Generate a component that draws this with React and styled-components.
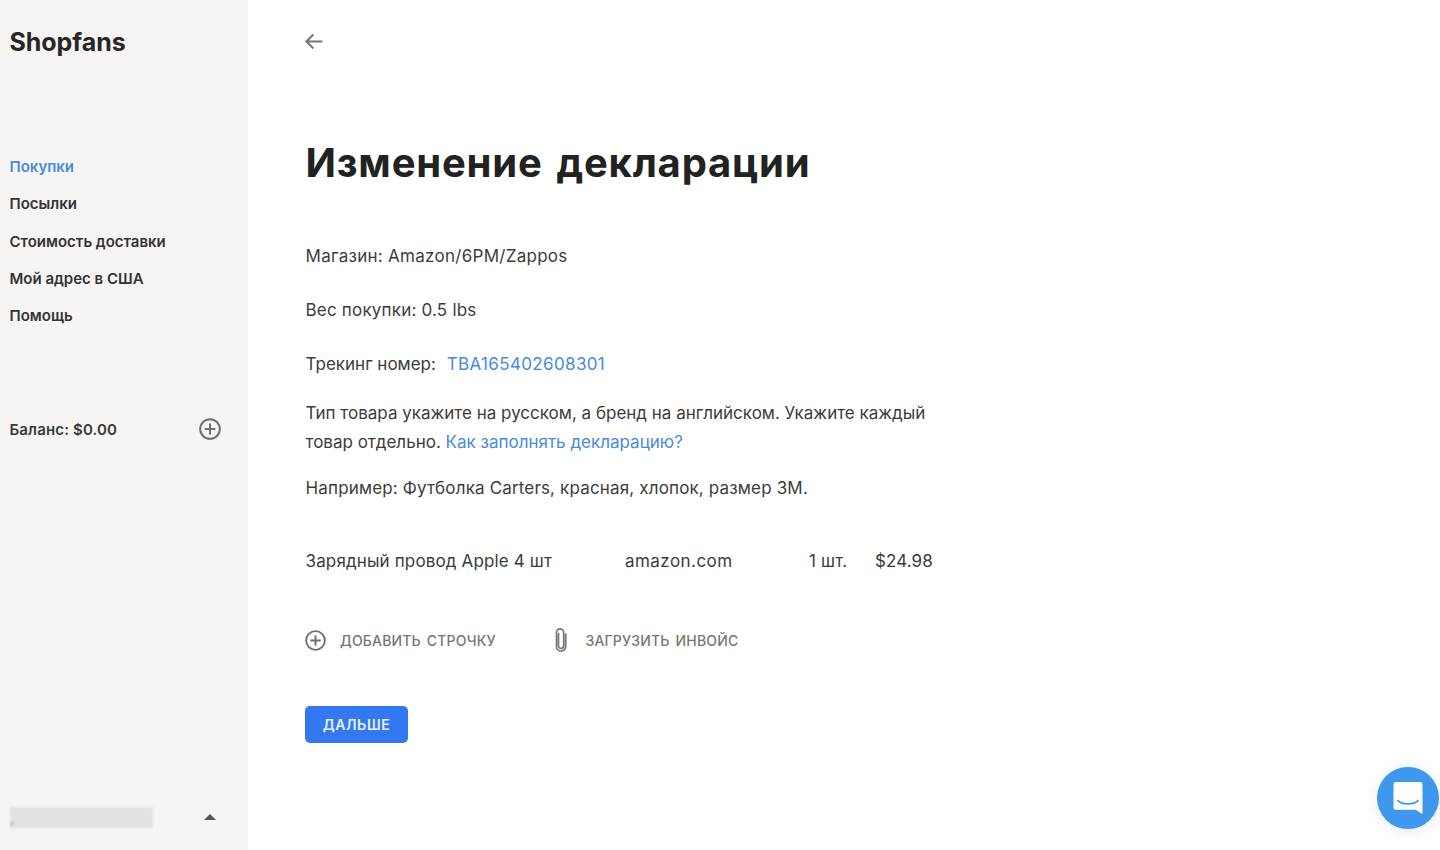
import React from "react";
import styled, { createGlobalStyle } from "styled-components";

const Global = createGlobalStyle`
  html, body { margin: 0; padding: 0; background: #fff; }
  body { font-family: Inter, "Liberation Sans", sans-serif; color: #2b2b2b; -webkit-font-smoothing: antialiased; }
  #root { height: 850px; overflow: hidden; }
`;

const Page = styled.div`
  display: flex;
  width: 1440px;
  height: 850px;
  position: relative;
  overflow: hidden;
`;

const Sidebar = styled.aside`
  width: 248px;
  flex: none;
  box-sizing: border-box;
  background: #f6f5f3;
  padding: 26px 0 20px 9.5px;
  display: flex;
  flex-direction: column;
`;

const Logo = styled.div`
  font-size: 25px;
  line-height: 32px;
  font-weight: 700;
  color: #272727;
  letter-spacing: -0.05px;
`;

const Nav = styled.nav`
  margin-top: 98px;
  display: flex;
  flex-direction: column;
  gap: 15.3px;
`;

const NavItem = styled.a`
  font-size: 15px;
  line-height: 22px;
  font-weight: 600;
  letter-spacing: 0;
  color: ${(p) => (p.$active ? "#4b8ae0" : "#333")};
`;

const Balance = styled.div`
  margin-top: 90px;
  display: flex;
  align-items: center;
  justify-content: space-between;
  width: 211.5px;
  height: 24px;
  font-size: 15px;
  font-weight: 600;
  letter-spacing: 0.15px;
  color: #3a3a3a;
`;

const Account = styled.div`
  margin-top: auto;
  margin-bottom: 2px;
  display: flex;
  align-items: center;
  justify-content: space-between;
  width: 206px;
  height: 22px;
`;

const Redacted = styled.div`
  position: relative;
  width: 143px;
  height: 21px;
  background: #e2e2e1;
  filter: blur(1px);

  &::before {
    content: "";
    position: absolute;
    left: 1px;
    bottom: 2px;
    width: 2px;
    height: 5px;
    background: #bbb;
    transform: rotate(25deg);
  }
`;

const Caret = styled.div`
  width: 0;
  height: 0;
  border-left: 6px solid transparent;
  border-right: 6px solid transparent;
  border-bottom: 6px solid #555;
`;

const Main = styled.main`
  flex: 1;
  padding: 28px 0 0 57.5px;
  display: flex;
  flex-direction: column;
  align-items: flex-start;
`;

const BackButton = styled.button`
  border: 0;
  background: none;
  padding: 0;
  margin-left: -1px;
  width: 18px;
  height: 26px;
  color: #777;
  display: flex;
  align-items: center;
`;

const Title = styled.h1`
  margin: 84px 0 0;
  font-size: 40px;
  line-height: 50px;
  font-weight: 700;
  letter-spacing: 0.8px;
  word-spacing: 3.5px;
  color: #222;
`;

const Info = styled.p`
  margin: ${(p) => p.$top}px 0 0;
  font-size: 17px;
  line-height: 29px;
  letter-spacing: ${(p) => p.$track ?? 0}px;
  color: #3c3c3c;
  width: 640px;
`;

const Link = styled.a`
  color: #4a89dc;
  margin-left: ${(p) => p.$gap || 0}px;
  letter-spacing: ${(p) => p.$track ?? 0}px;
`;

const ItemRow = styled.div`
  margin-top: 44px;
  display: flex;
  font-size: 17px;
  line-height: 29px;
  color: #3c3c3c;
`;

const Cell = styled.span`
  width: ${(p) => p.$w}px;
  flex: none;
  white-space: nowrap;
  letter-spacing: ${(p) => p.$track ?? 0}px;
`;

const Actions = styled.div`
  margin-top: 51px;
  margin-left: -0.5px;
  display: flex;
  align-items: center;
  height: 26px;
`;

const Action = styled.div`
  display: flex;
  align-items: center;
  gap: ${(p) => p.$gap}px;
  width: ${(p) => p.$w}px;
  font-size: 14px;
  font-weight: 500;
  letter-spacing: 0.18px;
  word-spacing: 2px;
  color: #767676;
  white-space: nowrap;
`;

const Primary = styled.button`
  margin-top: 53px;
  margin-left: -0.5px;
  width: 103px;
  height: 37px;
  border: 0;
  border-radius: 5px;
  background: #3378f0;
  color: #e8f0fd;
  font-family: inherit;
  font-size: 14px;
  font-weight: 600;
  letter-spacing: 0.6px;
`;

const Chat = styled.div`
  position: absolute;
  left: 1377px;
  top: 767px;
  width: 62px;
  height: 62px;
  border-radius: 50%;
  background: #3f97ee;
  box-shadow: 0 2px 14px rgba(0, 0, 0, 0.1);
  display: flex;
  align-items: center;
  justify-content: center;
`;

const PlusCircle = ({ size }) => (
  <svg width={size} height={size} viewBox="0 0 22 22" fill="none" stroke="#707070" strokeWidth="2">
    <circle cx="11" cy="11" r="9.8" />
    <path d="M11 5.6v10.8M5.6 11h10.8" />
  </svg>
);

const Clip = () => (
  <svg width="16" height="26" viewBox="0 0 16 26" fill="none" stroke="#767676" strokeWidth="1.7" strokeLinecap="round">
    <path d="M5.5 6.5v12.2a2.6 2.6 0 0 0 5.2 0V5.4a3.6 3.6 0 0 0-7.2 0v14a4.6 4.6 0 0 0 9.2 0V7" />
  </svg>
);

const Arrow = () => (
  <svg width="18" height="16" viewBox="0 0 18 16" fill="none" stroke="#777" strokeWidth="2">
    <path d="M17.5 8.5H1.5M8.4 1.5l-7 7 7 7" />
  </svg>
);

const ChatIcon = () => (
  <svg width="30" height="34" viewBox="0 0 30 34" fill="none">
    <path d="M3 1h24a2.5 2.5 0 0 1 2.5 2.5V33l-7-4.2H3A2.5 2.5 0 0 1 .5 26.3v-22.8A2.5 2.5 0 0 1 3 1z" fill="#fff" />
    <path d="M5 19.5c3 4.4 17 4.4 20 0" stroke="#3f97ee" strokeWidth="1.8" strokeLinecap="round" />
  </svg>
);

const navItems = ["Покупки", "Посылки", "Стоимость доставки", "Мой адрес в США", "Помощь"];

export default function App() {
  return (
    <Page>
      <Global />
      <Sidebar>
        <Logo>Shopfans</Logo>
        <Nav>
          {navItems.map((n, i) => (
            <NavItem key={n} $active={i === 0}>{n}</NavItem>
          ))}
        </Nav>
        <Balance>
          <span>Баланс: $0.00</span>
          <PlusCircle size={22} />
        </Balance>
        <Account>
          <Redacted />
          <Caret />
        </Account>
      </Sidebar>
      <Main>
        <BackButton aria-label="Назад"><Arrow /></BackButton>
        <Title>Изменение декларации</Title>
        <Info $top={54} $track={0.28}>Магазин: Amazon/6PM/Zappos</Info>
        <Info $top={25} $track={0.2}>Вес покупки: 0.5 lbs</Info>
        <Info $top={25}>Трекинг номер: <Link $gap={6} $track={0.36}>TBA165402608301</Link></Info>
        <Info $top={20}>
          Тип товара укажите на русском, а бренд на английском. Укажите каждый<br />
          товар отдельно. <Link>Как заполнять декларацию?</Link>
        </Info>
        <Info $top={17} $track={0.16}>Например: Футболка Carters, красная, хлопок, размер 3M.</Info>
        <ItemRow>
          <Cell $w={319.5} $track={0.14}>Зарядный провод Apple 4 шт</Cell>
          <Cell $w={184} $track={0.45}>amazon.com</Cell>
          <Cell $w={66} $track={0.2}>1 шт.</Cell>
          <Cell $w={70} $track={0.1}>$24.98</Cell>
        </ItemRow>
        <Actions>
          <Action $w={247.5} $gap={14}><PlusCircle size={21} />ДОБАВИТЬ СТРОЧКУ</Action>
          <Action $w={200} $gap={17}><Clip />ЗАГРУЗИТЬ ИНВОЙС</Action>
        </Actions>
        <Primary>ДАЛЬШЕ</Primary>
      </Main>
      <Chat><ChatIcon /></Chat>
    </Page>
  );
}
